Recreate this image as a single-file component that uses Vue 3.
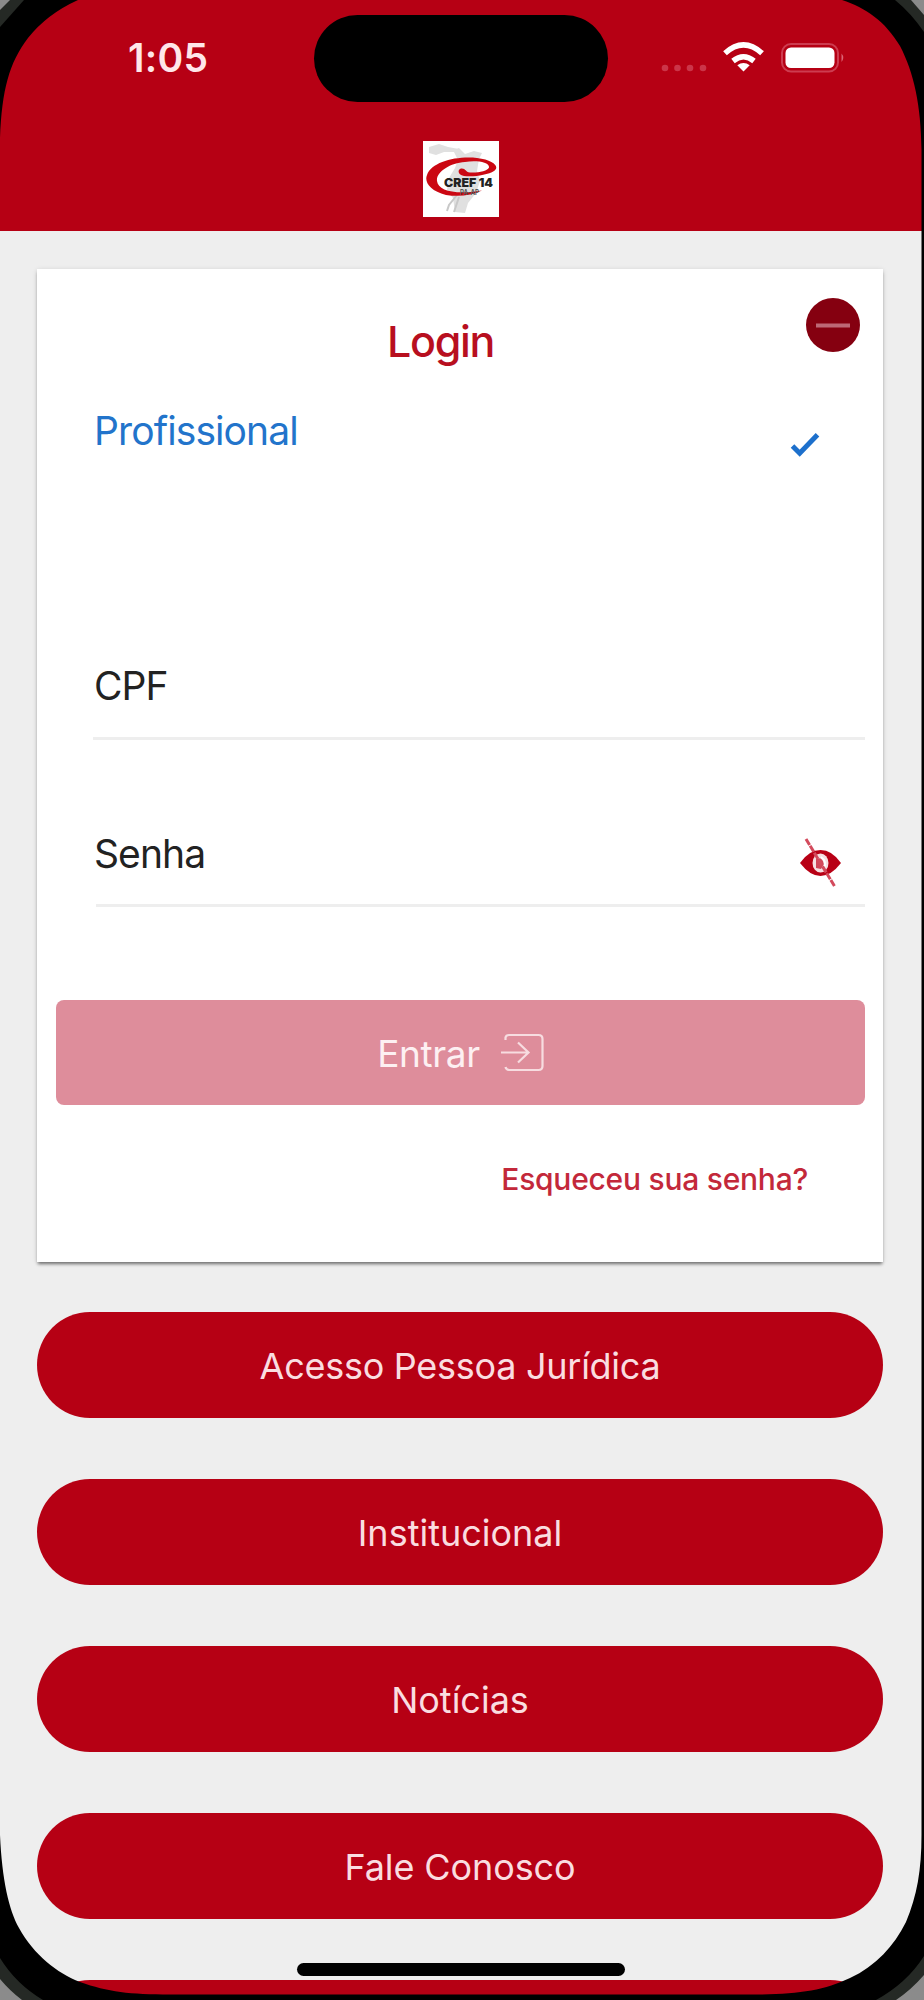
<script setup>
const links = [
  { label: 'Acesso Pessoa Jurídica', cls: 'pj' },
  { label: 'Institucional', cls: 'inst' },
  { label: 'Notícias', cls: 'news' },
  { label: 'Fale Conosco', cls: 'talk' },
  { label: '', cls: 'next' },
]
</script>

<template>
  <div class="phone">
    <header class="header">
      <div class="status">
        <span class="time">1:05</span>
        <svg class="signals" width="190" height="40" viewBox="0 0 190 40">
          <g fill="#cb3549">
            <circle cx="9" cy="28" r="3.3" /><circle cx="21.500" cy="28" r="3.3" />
            <circle cx="34" cy="28" r="3.3" /><circle cx="47" cy="28" r="3.3" />
          </g>
          <g fill="none" stroke="#fff" stroke-width="5.500">
            <path d="M69 13.200Q87.500 -3.400 106 13.200" />
            <path d="M77 21Q87.500 12.500 98 21" />
          </g>
          <path d="M87.500 31.500L81.300 25.200Q87.500 20.800 93.700 25.200Z" fill="#fff" />
          <rect x="126" y="4" width="56" height="27.500" rx="9" fill="none" stroke="#cd3c50" stroke-width="2" />
          <rect x="129.500" y="7.500" width="49" height="20.500" rx="5.500" fill="#fff" />
          <path d="M185.500 13.500Q189 17.500 185.500 22Z" fill="#dc6576" />
        </svg>
      </div>
      <svg class="logo" width="76" height="76" viewBox="0 0 76 76">
        <rect width="76" height="76" fill="#fff" />
        <path d="M6 6l10-3 9 3 11 2-3 3-12 0-8 3-7-2zM30 9l6-2 6 6 9-3 8 2-3 6-2 12 3 10-4 12-8 10-3 10-10-1-2-14-6-8 2-12 6-10 3-8z" fill="#e0e0e0" />
        <path d="M34 54l-8 10-2 6M36 56l-5 15" stroke="#c8c8c8" stroke-width="2" fill="none" />
        <path d="M59 49.500Q43 57 23 54C7 50 1 41 4 34C9 21 32 15 54 17C71 19 77 26 71 30C65 34 51 36 41 35C35 34 34 29 38 27.500C43 27 42 31 47 31.500C55 32 65 30 66 26.500C67 21 53 19 42 21C27 22 13 31 14 40C15 50 33 54 59 49.500Z" fill="#cb0712" />
        <text x="21" y="46" class="logo-name" textLength="49" lengthAdjust="spacingAndGlyphs">CREF 14</text>
        <text x="37" y="53.500" class="logo-sub" textLength="19" lengthAdjust="spacingAndGlyphs">PA-AP</text>
      </svg>
      <div class="island"></div>
    </header>

    <main class="content">
      <section class="card">
        <div class="title-row">
          <h1 class="title">Login</h1>
          <svg class="collapse" width="56" height="56" viewBox="0 0 56 56">
            <circle cx="28" cy="28" r="27" fill="#850010" />
            <path d="M11 28.500H45" stroke="#bd6876" stroke-width="4" />
          </svg>
        </div>
        <div class="option">
          <span class="option-label">Profissional</span>
          <svg class="check" width="30" height="26" viewBox="0 0 30 26">
            <path d="M2.500 14L9.700 21.200L27.500 2.700" fill="none" stroke="#1d70cc" stroke-width="5" />
          </svg>
        </div>
        <div class="field cpf"><span class="cpf-label">CPF</span></div>
        <div class="field senha">
          <span class="senha-label">Senha</span>
          <svg class="eye" width="44" height="52" viewBox="0 0 44 52">
            <path d="M1 26Q10 13 21.500 13T42 26Q32 39 21.500 39T1 26Z" fill="#b80015" />
            <ellipse cx="21.500" cy="26" rx="8" ry="9.500" fill="#f6dfe2" />
            <path d="M17 22Q23 19 25 27L22 32L17 31Z" fill="#d0475a" />
            <path d="M22 20Q28 24 25 32" stroke="#fff" stroke-width="2" fill="none" />
            <path d="M7 2L36 50" stroke="#d34a5c" stroke-width="3" stroke-dasharray="7 1" />
          </svg>
        </div>
        <button class="enter">
          <span class="enter-label">Entrar</span>
          <svg width="46" height="40" viewBox="0 0 46 40" fill="none" stroke="#f7dce0" stroke-width="2.200">
            <path d="M5.500 7V4.500Q6 2 9 2H38.500Q42.500 2 42.500 6V33Q42.500 37 38.500 37H9Q6 36.500 5.500 34" />
            <path d="M1 19.500H28M18 9.500L28.500 19.500L18 29.500" />
          </svg>
        </button>
        <a class="forgot">Esqueceu sua senha?</a>
      </section>

      <nav class="links">
        <button v-for="l in links" :key="l.cls" class="pill" :class="l.cls"><span>{{ l.label }}</span></button>
      </nav>
    </main>

    <div class="home-bar"></div>
    <svg class="bezel" width="924" height="2000" viewBox="0 0 924 2000">
      <g fill="#000">
        <path d="M0 0H78Q47 14 28 38C9 63 2 90 0 138Z" />
        <path d="M842 0H924V2000H0V1835C2 1880 9 1910 19 1928C34 1955 57 1973 80 1982C108 1992 130 1994.500 170 1994.500H760C800 1994 825 1990 850 1978C876 1966 894 1946 906 1922C917 1896 921.500 1870 921.500 1835V150C921 105 914 73 900 46C885 21 866 8 842 0Z" />
      </g>
      <g fill="#252925">
        <path d="M0 0H24L0 27Z" /><path d="M895 0H924V32Q911 13 895 0Z" />
        <path d="M0 1958Q16 1984 43 2000H0Z" /><path d="M924 1956Q907 1983 876 2000H924Z" />
      </g>
      <g fill="#8b8b8b">
        <path d="M0 0H10L0 10Z" /><path d="M911 0H924V15Z" />
        <path d="M0 1979Q10 1991 22 2000H0Z" /><path d="M924 1975Q911 1990 896 2000H924Z" />
      </g>
    </svg>
  </div>
</template>

<style>
body { margin: 0; background: #efefef; }
</style>

<style scoped>
.phone {
  position: relative;
  width: 924px;
  height: 2000px;
  overflow: hidden;
  background: #eeeeee;
  font-family: Inter, Roboto, sans-serif;
}
.header {
  position: relative;
  box-sizing: border-box;
  height: 231px;
  background: #b60014;
  display: flex;
  flex-direction: column;
}
.status {
  height: 141px;
  display: flex;
  justify-content: space-between;
  align-items: flex-start;
  padding: 38px 78px 0 128px;
  box-sizing: border-box;
}
.time { font-size: 39px; line-height: 40px; font-weight: 600; letter-spacing: .3px; color: #ffe6e9; }
.signals { margin-top: 2px; }
.logo { margin-left: 423px; display: block; }
.logo-name { font: 900 12px Inter, sans-serif; fill: #222; }
.logo-sub { font: 700 7px Inter, sans-serif; fill: #555; }
.island {
  position: absolute;
  left: 314px;
  top: 15px;
  width: 294px;
  height: 87px;
  border-radius: 44px;
  background: #000;
}
.content { padding: 38px 41px 0 37px; }
.card {
  box-sizing: border-box;
  height: 993px;
  background: #fff;
  padding: 30px 18px 0 19px;
  box-shadow: 0 3px 3px -1px rgba(0, 0, 0, .48), 0 1px 5px rgba(0, 0, 0, .14);
  display: flex;
  flex-direction: column;
}
.title-row { height: 84px; display: flex; padding-left: 331px; justify-content: space-between; }
.title { margin: 12px 0 0; font-size: 43px; line-height: 60px; font-weight: 500; letter-spacing: -1.3px; color: #b80f1f; }
.collapse { margin: -2px 4px 0 0; }
.option { height: 96px; display: flex; justify-content: space-between; padding: 0 45px 0 38px; color: #2274cb; }
.option-label { font-size: 39px; line-height: 96px; letter-spacing: -.9px; }
.check { margin-top: 49px; }
.field {
  box-sizing: border-box;
  border-bottom: 3px solid #eeeeee;
  display: flex;
  justify-content: space-between;
  font-size: 39px;
  letter-spacing: -.9px;
  color: #222;
}
.cpf { margin: 155px 0 0 37px; height: 106px; line-height: 104px; }
.senha { margin: 61px 0 0 40px; height: 106px; line-height: 105px; }
.cpf-label { margin-left: 1px; }
.senha-label { margin-left: -2px; }
.eye { margin: 36px 22px 0 0; }
.enter {
  margin: 93px 0 0;
  height: 105px;
  border: 0;
  border-radius: 8px;
  background: #de8d9b;
  display: flex;
  align-items: center;
  justify-content: center;
  gap: 20px;
  font: 400 37px Inter, Roboto, sans-serif;
  color: #fdf0f2;
  flex: none;
}
.enter-label { letter-spacing: -.4px; margin: 1px 0 0 2px; }
.forgot {
  margin: 54px 57px 0 0;
  align-self: flex-end;
  font-size: 30px;
  line-height: 40px;
  font-weight: 500;
  letter-spacing: -.25px;
  color: #c3283a;
}
.links { margin-top: 50px; display: flex; flex-direction: column; gap: 61px; }
.pill {
  height: 106px;
  flex: none;
  border: 0;
  padding: 2px 0 0;
  border-radius: 53px;
  background: #b60014;
  color: #fadde0;
  font: 400 36px Inter, Roboto, sans-serif;
}
.pj { letter-spacing: -.27px; }
.talk { letter-spacing: -.1px; }
.home-bar {
  position: absolute;
  left: 297px;
  top: 1963px;
  width: 328px;
  height: 13px;
  border-radius: 7px;
  background: #000;
}
.bezel { position: absolute; left: 0; top: 0; pointer-events: none; }
</style>
